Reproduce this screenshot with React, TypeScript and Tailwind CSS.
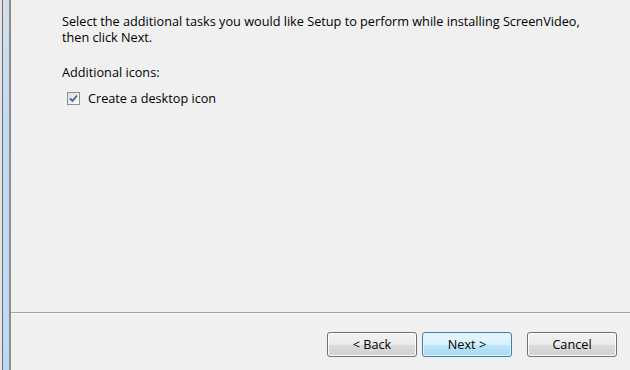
const FONT = "font-['Segoe_UI','Open_Sans','DejaVu_Sans',sans-serif]";

function WizButton({ label, primary }: { label: string; primary?: boolean }) {
  return (
    <button
      className={`flex h-[25px] w-[90px] items-center justify-center rounded-[3px] border text-[12.7px] text-black ${
        primary
          ? "border-[#3c7fb1] bg-[linear-gradient(#eaf6fd_0%,#d9f0fc_50%,#bee6fd_51%,#a7d9f5_100%)] shadow-[inset_0_0_0_1px_#e5f4fc]"
          : "border-[#707070] bg-[linear-gradient(#f2f2f2_0%,#ebebeb_50%,#dddddd_51%,#cfcfcf_100%)] shadow-[inset_0_0_0_1px_#fcfcfc]"
      }`}
    >
      {label}
    </button>
  );
}

export default function App() {
  return (
    <div className={`flex h-[370px] w-[630px] overflow-hidden bg-[#f0f0f0] ${FONT}`}>
      {/* left window edge */}
      <div className="flex h-full w-[11px] shrink-0">
        <div className="w-[2px] bg-[#e4e4e4]" />
        <div className="w-[1px] bg-[#6d6d6d]" />
        <div className="w-[6px] bg-[linear-gradient(#d6dfe8_0%,#c3dcf3_25%,#bcd9f4_100%)]" />
        <div className="w-[2px] bg-[#8c8c8c]" />
      </div>

      <div className="flex flex-1 flex-col">
        <div className="flex-1 pl-[51px] pt-[13px] text-[12.7px] leading-[16px] text-black">
          <p>Select the additional tasks you would like Setup to perform while installing ScreenVideo,</p>
          <p>then click Next.</p>
          <p className="mt-[19px]">Additional icons:</p>
          <label className="ml-[5px] mt-[10px] flex items-center gap-[8px]">
            <span className="flex h-[13px] w-[13px] items-center justify-center border border-[#8e8f8f] bg-[linear-gradient(135deg,#dcdcdc,#fdfdfd)]">
              <svg width="9" height="9" viewBox="0 0 9 9">
                <path d="M1 4.5 L3.5 7 L8 1.5" fill="none" stroke="#4a5f97" strokeWidth="1.8" />
              </svg>
            </span>
            Create a desktop icon
          </label>
        </div>

        <div className="h-[1px] bg-[#a0a0a0]" />
        <div className="h-[1px] bg-[#ffffff]" />

        <div className="flex h-[56px] items-start justify-end pr-[13px] pt-[18px]">
          <WizButton label="< Back" />
          <div className="ml-[5px]">
            <WizButton label="Next >" primary />
          </div>
          <div className="ml-[15px]">
            <WizButton label="Cancel" />
          </div>
        </div>
      </div>
    </div>
  );
}
